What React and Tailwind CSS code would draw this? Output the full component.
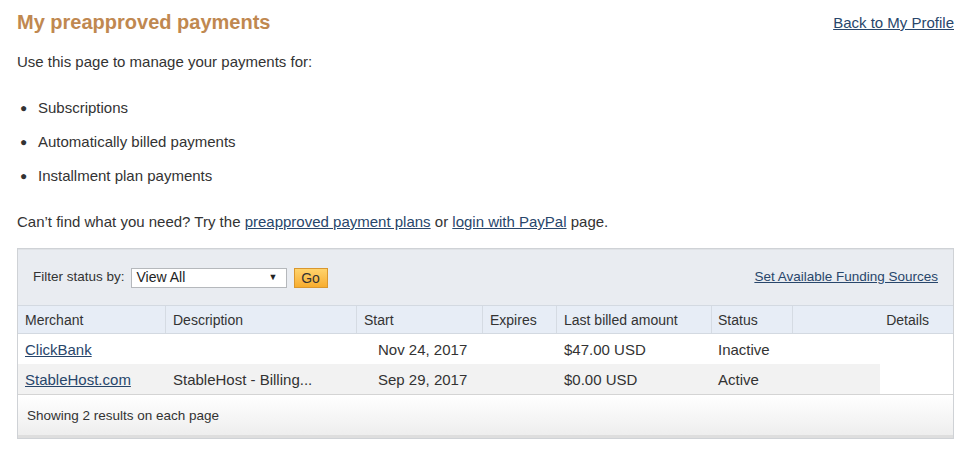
export default function App() {
  const cols = "grid grid-cols-[148px_191px_126px_74px_155px_81px_1fr]";

  return (
    <div className="w-[972px] h-[455px] bg-white text-[#333] font-['Liberation_Sans',Arial,sans-serif] pl-[17px] pr-[18px] pt-[10px]">
      {/* page header */}
      <div className="flex justify-between items-start">
        <h1 className="text-[20px] leading-[25px] font-bold text-[#c08850]">
          My preapproved payments
        </h1>
        <a href="#" className="text-[15px] leading-[25px] text-[#28466b] underline">
          Back to My Profile
        </a>
      </div>

      <p className="mt-[17px] text-[15px] leading-[20px]">
        Use this page to manage your payments for:
      </p>

      <ul className="mt-[26px] flex flex-col gap-[14px] text-[15px] leading-[20px]">
        {["Subscriptions", "Automatically billed payments", "Installment plan payments"].map((item) => (
          <li key={item} className="flex items-center">
            <span className="w-[21px] pl-[3px] text-[12px]">●</span>
            {item}
          </li>
        ))}
      </ul>

      <p className="mt-[26px] text-[15px] leading-[20px]">
        Can’t find what you need? Try the{" "}
        <a href="#" className="text-[#28466b] underline">preapproved payment plans</a> or{" "}
        <a href="#" className="text-[#28466b] underline">login with PayPal</a> page.
      </p>

      {/* payments table */}
      <div className="mt-[16px] border border-[#cfd2d6]">
        <div className="h-[56px] bg-[#e9ecf1] border-t border-[#dfe2e6] flex items-center justify-between pl-[15px] pr-[15px] text-[13.5px]">
          <div className="flex items-center">
            <span>Filter status by:</span>
            <div className="ml-[6px] w-[156px] h-[20px] bg-white border border-[#b5b8bc] flex items-center justify-between pl-[5px] pr-[8px] text-[14px] text-[#222]">
              <span>View All</span>
              <span className="text-[9px]">▼</span>
            </div>
            <button className="ml-[7px] w-[34px] h-[20px] bg-gradient-to-b from-[#ffd36b] to-[#f7ad2d] border border-[#d9972f] text-[14px] text-[#333] leading-none">
              Go
            </button>
          </div>
          <a href="#" className="text-[#28466b] underline">Set Available Funding Sources</a>
        </div>

        <div className={`${cols} h-[29px] bg-[#e7edf6] border-t border-b border-[#d3d9e1] text-[14px] items-center`}>
          <div className="pl-[7px] pt-[1px] h-full flex items-center border-r border-[#d5dbe3]">Merchant</div>
          <div className="pl-[7px] pt-[1px] h-full flex items-center border-r border-[#d5dbe3]">Description</div>
          <div className="pl-[7px] pt-[1px] h-full flex items-center border-r border-[#d5dbe3]">Start</div>
          <div className="pl-[7px] pt-[1px] h-full flex items-center border-r border-[#d5dbe3]">Expires</div>
          <div className="pl-[7px] pt-[1px] h-full flex items-center border-r border-[#d5dbe3]">Last billed amount</div>
          <div className="pl-[6px] pt-[1px] h-full flex items-center border-r border-[#d5dbe3]">Status</div>
          <div className="pr-[24px] pt-[1px] h-full flex items-center justify-end">Details</div>
        </div>

        <div className={`${cols} h-[30px] pt-[2px] text-[15px] items-center`}>
          <div className="pl-[7px]"><a href="#" className="text-[#28466b] underline">ClickBank</a></div>
          <div className="pl-[7px]"></div>
          <div className="pl-[21px]">Nov 24, 2017</div>
          <div></div>
          <div className="pl-[7px]">$47.00 USD</div>
          <div className="pl-[6px]">Inactive</div>
          <div></div>
        </div>

        <div className={`${cols} h-[30px] text-[15px]`}>
          <div className="pl-[7px] pt-[2px] bg-[#f2f2f2] flex items-center"><a href="#" className="text-[#28466b] underline">StableHost.com</a></div>
          <div className="pl-[7px] pt-[2px] bg-[#f2f2f2] flex items-center">StableHost - Billing...</div>
          <div className="pl-[21px] pt-[2px] bg-[#f2f2f2] flex items-center">Sep 29, 2017</div>
          <div className="bg-[#f2f2f2]"></div>
          <div className="pl-[7px] pt-[2px] bg-[#f2f2f2] flex items-center">$0.00 USD</div>
          <div className="pl-[6px] pt-[2px] bg-[#f2f2f2] flex items-center">Active</div>
          <div className="flex">
            <div className="w-[87px] bg-[#f2f2f2]"></div>
          </div>
        </div>

        <div className="h-[44px] border-t border-[#d4d4d4] border-b-[3px] border-b-[#dedede] bg-gradient-to-b from-white to-[#eeeeee] flex items-center pl-[9px] pt-[2px] text-[13.5px]">
          Showing 2 results on each page
        </div>
      </div>
    </div>
  );
}
